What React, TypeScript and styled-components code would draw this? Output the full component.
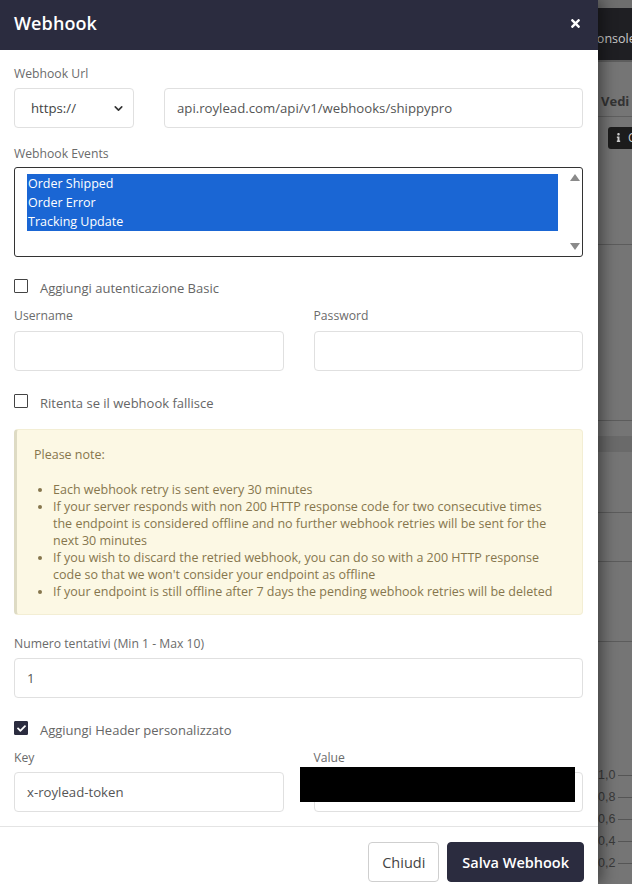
import styled, { createGlobalStyle } from "styled-components";
import { FaTimes, FaCheck, FaInfo } from "react-icons/fa";
import { ChevronDown } from "lucide-react";

const GlobalStyle = createGlobalStyle`
    html, body {
        margin: 0;
        padding: 0;
        background: #737373;
    }
    body {
        font-family: "Open Sans", "DejaVu Sans", sans-serif;
        width: 632px;
        height: 884px;
        overflow: hidden;
    }
    * {
        box-sizing: border-box;
    }
`;

const events = ["Order Shipped", "Order Error", "Tracking Update"];

const notes = [
    "Each webhook retry is sent every 30 minutes",
    "If your server responds with non 200 HTTP response code for two consecutive times the endpoint is considered offline and no further webhook retries will be sent for the next 30 minutes",
    "If you wish to discard the retried webhook, you can do so with a 200 HTTP response code so that we won't consider your endpoint as offline",
    "If your endpoint is still offline after 7 days the pending webhook retries will be deleted"
];

const ticks = ["1,0", "0,8", "0,6", "0,4", "0,2"];

function App() {
    return (
        <Page>
            <GlobalStyle />
            <Modal>
                <Header>
                    <h3>Webhook</h3>
                    <CloseBtn><FaTimes /></CloseBtn>
                </Header>
                <Body>
                    <Label>Webhook Url</Label>
                    <UrlRow>
                        <FakeSelect>
                            <span>https://</span>
                            <ChevronDown size={13} strokeWidth={3} />
                        </FakeSelect>
                        <Input>api.roylead.com/api/v1/webhooks/shippypro</Input>
                    </UrlRow>

                    <Label $mt={17} $mb={4}>Webhook Events</Label>
                    <ListBox>
                        <Options>
                            {events.map((e) => (
                                <Option key={e}>{e}</Option>
                            ))}
                        </Options>
                        <ScrollTrack>
                            <Arrow $up />
                            <Arrow />
                        </ScrollTrack>
                    </ListBox>

                    <CheckRow $mt={21}>
                        <Box />
                        <span>Aggiungi autenticazione Basic</span>
                    </CheckRow>

                    <TwoCols $mt={13}>
                        <div>
                            <Label $mb={6}>Username</Label>
                            <Input />
                        </div>
                        <div>
                            <Label $mb={6}>Password</Label>
                            <Input />
                        </div>
                    </TwoCols>

                    <CheckRow $mt={22}>
                        <Box />
                        <span>Ritenta se il webhook fallisce</span>
                    </CheckRow>

                    <Alert>
                        <p>Please note:</p>
                        <ul>
                            {notes.map((n) => (
                                <li key={n}>{n}</li>
                            ))}
                        </ul>
                    </Alert>

                    <Label $mt={20}>Numero tentativi (Min 1 - Max 10)</Label>
                    <Input>1</Input>

                    <CheckRow $mt={22}>
                        <Box $checked><FaCheck /></Box>
                        <span>Aggiungi Header personalizzato</span>
                    </CheckRow>

                    <TwoCols $mt={13}>
                        <div>
                            <Label>Key</Label>
                            <Input>x-roylead-token</Input>
                        </div>
                        <ValueField>
                            <Label>Value</Label>
                            <Input />
                            <Redacted />
                        </ValueField>
                    </TwoCols>
                </Body>
                <Footer>
                    <Button>Chiudi</Button>
                    <Button $primary>Salva Webhook</Button>
                </Footer>
            </Modal>

            <Backdrop>
                <TopBar />
                <DarkBar>Console</DarkBar>
                <Section $h={55}>
                    <b>Vedi</b>
                </Section>
                <BadgeRow>
                    <Badge><FaInfo /> C</Badge>
                </BadgeRow>
                <Rule $mt={95} />
                <Rule $mt={175} />
                <Band />
                <Rule $mt={60} />
                <Rule $mt={48} />
                <Rule $mt={79} />
                <Axis>
                    {ticks.map((t) => (
                        <Tick key={t}>
                            <span>{t}</span>
                            <i />
                        </Tick>
                    ))}
                </Axis>
            </Backdrop>
        </Page>
    );
}

const Page = styled.div`
    display: flex;
    width: 632px;
    height: 884px;
    overflow: hidden;
`;

const Modal = styled.div`
    width: 598px;
    flex-shrink: 0;
    background: #fff;
    box-shadow: 4px 0 14px rgba(0, 0, 0, 0.45);
    position: relative;
    z-index: 1;
    display: flex;
    flex-direction: column;
`;

const Header = styled.div`
    height: 50px;
    background: #2b2c3f;
    display: flex;
    align-items: center;
    justify-content: space-between;
    padding: 0 16px 4px 14px;
    h3 {
        margin: 0;
        color: #fff;
        font-size: 18px;
        font-weight: 600;
        letter-spacing: 0.1px;
    }
`;

const CloseBtn = styled.span`
    color: #fff;
    display: flex;
    font-size: 13px;
`;

const Body = styled.div`
    padding: 15px 15px 14px 14px;
    display: flex;
    flex-direction: column;
    border-bottom: 1px solid #e4e4e4;
`;

const Label = styled.label<{ $mt?: number; $mb?: number }>`
    display: block;
    font-size: 12.2px;
    line-height: 18px;
    color: #6b6b6b;
    margin-top: ${(p) => p.$mt ?? 0}px;
    margin-bottom: ${(p) => p.$mb ?? 5}px;
`;

const UrlRow = styled.div`
    display: grid;
    grid-template-columns: 120px 1fr;
    gap: 30px;
`;

const Input = styled.div`
    height: 40px;
    border: 1px solid #e0e0e0;
    border-radius: 4px;
    padding: 0 12px;
    display: flex;
    align-items: center;
    font-size: 13.2px;
    color: #555;
    background: #fff;
`;

const FakeSelect = styled(Input)`
    justify-content: space-between;
    padding: 0 8px 0 16px;
    color: #444;
    svg {
        color: #333;
    }
`;

const ListBox = styled.div`
    height: 90px;
    border: 1px solid #333;
    border-radius: 3px;
    display: flex;
    padding: 6px 0 6px 12px;
`;

const Options = styled.div`
    flex: 1;
    padding-right: 10px;
`;

const Option = styled.div`
    background: #1a66d4;
    color: #fff;
    font-size: 12.5px;
    font-weight: 500;
    line-height: 19px;
    padding-left: 1px;
`;

const ScrollTrack = styled.div`
    width: 14px;
    display: flex;
    flex-direction: column;
    justify-content: space-between;
    align-items: center;
`;

const Arrow = styled.span<{ $up?: boolean }>`
    width: 0;
    height: 0;
    border-left: 5px solid transparent;
    border-right: 5px solid transparent;
    ${(p) => (p.$up ? "border-bottom: 7px solid #8a8a8a;" : "border-top: 7px solid #8a8a8a;")}
`;

const CheckRow = styled.div<{ $mt?: number }>`
    display: flex;
    align-items: center;
    gap: 12px;
    height: 16px;
    margin-top: ${(p) => p.$mt ?? 0}px;
    font-size: 13px;
    color: #666;
    span {
        line-height: 16px;
        padding-top: 3px;
    }
`;

const Box = styled.div<{ $checked?: boolean }>`
    width: 14px;
    height: 14px;
    border: 1px solid ${(p) => (p.$checked ? "#2b2c3f" : "#444")};
    background: ${(p) => (p.$checked ? "#2b2c3f" : "#fff")};
    border-radius: 1px;
    display: flex;
    align-items: center;
    justify-content: center;
    color: #fff;
    font-size: 9px;
    flex-shrink: 0;
`;

const TwoCols = styled.div<{ $mt?: number }>`
    display: grid;
    grid-template-columns: 1fr 1fr;
    gap: 30px;
    margin-top: ${(p) => p.$mt ?? 0}px;
`;

const ValueField = styled.div`
    position: relative;
`;

const Redacted = styled.div`
    position: absolute;
    left: -14px;
    top: 18px;
    width: 275px;
    height: 35px;
    background: #000;
`;

const Alert = styled.div`
    margin-top: 20px;
    background: #fcf8e4;
    border: 1px solid #f3eed4;
    border-left: 3px solid #dedbc4;
    border-radius: 4px;
    padding: 16px 20px 14px 17px;
    color: #86764d;
    font-size: 12.5px;
    line-height: 17px;
    p {
        margin: 0 0 18px;
    }
    ul {
        margin: 0;
        padding-left: 19px;
    }
`;

const Footer = styled.div`
    display: flex;
    justify-content: flex-end;
    gap: 8px;
    padding: 15px 14px 0;
`;

const Button = styled.button<{ $primary?: boolean }>`
    height: 40px;
    border-radius: 4px;
    font-family: inherit;
    font-size: 14.5px;
    padding: 0 ${(p) => (p.$primary ? 14 : 13)}px;
    border: 1px solid ${(p) => (p.$primary ? "#2b2c3f" : "#cfcfcf")};
    background: ${(p) => (p.$primary ? "#2b2c3f" : "#fff")};
    color: ${(p) => (p.$primary ? "#fff" : "#444")};
    font-weight: ${(p) => (p.$primary ? 600 : 400)};
`;

/* page behind the dimmed overlay */
const Backdrop = styled.div`
    flex: 1;
    overflow: hidden;
    display: flex;
    flex-direction: column;
    background: #757575;
    white-space: nowrap;
`;

const TopBar = styled.div`
    height: 8px;
    background: #6e6e6e;
`;

const DarkBar = styled.div`
    height: 54px;
    background: #1f1f23;
    color: #c9c9c9;
    font-size: 12.5px;
    padding-top: 22px;
    text-indent: -9px;
    border-bottom: 2px solid #5d5d5d;
`;

const Section = styled.div<{ $h: number }>`
    height: ${(p) => p.$h}px;
    display: flex;
    align-items: flex-end;
    padding: 0 0 6px 3px;
    border-bottom: 1px solid #5f5f5f;
    b {
        color: #333;
        font-size: 13px;
    }
`;

const BadgeRow = styled.div`
    padding: 8px 0 0 10px;
`;

const Badge = styled.div`
    display: inline-flex;
    align-items: center;
    gap: 5px;
    height: 22px;
    padding: 0 6px;
    background: #1c1c1c;
    border-radius: 3px;
    color: #ccc;
    font-size: 12px;
    svg {
        font-size: 9px;
    }
`;

const Rule = styled.div<{ $mt: number }>`
    margin-top: ${(p) => p.$mt}px;
    height: 1px;
    background: #5c5c5c;
    flex-shrink: 0;
`;

const Band = styled.div`
    margin-top: 15px;
    height: 16px;
    background: #6a6a6a;
    flex-shrink: 0;
`;

const Axis = styled.div`
    margin-top: 125px;
    display: flex;
    flex-direction: column;
    gap: 5px;
`;

const Tick = styled.div`
    display: flex;
    align-items: center;
    gap: 3px;
    height: 17px;
    color: #3a3a3a;
    font-family: "Liberation Sans", sans-serif;
    font-size: 12.5px;
    i {
        flex: 1;
        height: 1px;
        background: #555;
    }
`;

export default App;
